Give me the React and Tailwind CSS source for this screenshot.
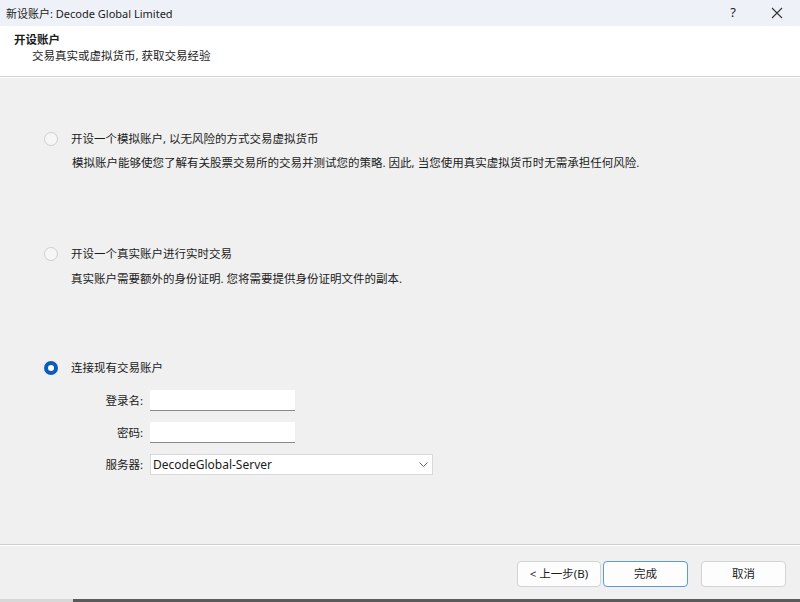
import React from "react";

const F = { fontFamily: '"Noto Sans", "Noto Sans CJK SC", sans-serif' };

function Radio({ checked }) {
  if (checked) {
    return (
      <div className="w-[14px] h-[14px] rounded-full bg-[#0b5cc1] flex items-center justify-center">
        <div className="w-[6px] h-[6px] rounded-full bg-white" />
      </div>
    );
  }
  return <div className="w-[14px] h-[14px] rounded-full border border-[#cfcfcf] bg-[#f6f6f6]" />;
}

export default function App() {
  return (
    <div className="w-[800px] h-[602px] flex flex-col bg-[#f0f0f0] text-[11.5px] text-[#1b1b1b] overflow-hidden" style={F}>
      {/* title bar */}
      <div className="h-[26px] bg-[#eef2f8] flex items-center pl-[6px] shrink-0">
        <span className="leading-none text-[11px]">新设账户: Decode Global Limited</span>
        <div className="ml-auto flex items-center">
          <span className="w-[44px] text-center text-[13px]">?</span>
          <span className="w-[44px] flex justify-center mr-[1px]">
            <svg width="12" height="12" viewBox="0 0 12 12" stroke="#333" strokeWidth="1.1" fill="none">
              <path d="M1 1L11 11M11 1L1 11" />
            </svg>
          </span>
        </div>
      </div>
      {/* header */}
      <div className="h-[50px] bg-white pl-[14px] pt-[6px] shrink-0 flex flex-col">
        <span className="font-bold leading-[16px]">开设账户</span>
        <span className="pl-[18px] leading-[16px]">交易真实或虚拟货币, 获取交易经验</span>
      </div>
      <div className="h-[1px] bg-[#d4d4d4] shrink-0" />
      <div className="h-[1px] bg-white shrink-0" />
      {/* body */}
      <div className="flex-1 flex flex-col pl-[44px]">
        <div className="mt-[53px] flex items-center h-[16px]">
          <Radio />
          <span className="ml-[13px]">开设一个模拟账户, 以无风险的方式交易虚拟货币</span>
        </div>
        <div className="mt-[8px] pl-[28px] leading-[16px]">模拟账户能够使您了解有关股票交易所的交易并测试您的策略. 因此, 当您使用真实虚拟货币时无需承担任何风险.</div>

        <div className="mt-[75px] flex items-center h-[16px]">
          <Radio />
          <span className="ml-[13px]">开设一个真实账户进行实时交易</span>
        </div>
        <div className="mt-[9px] pl-[27px] leading-[16px]">真实账户需要额外的身份证明. 您将需要提供身份证明文件的副本.</div>

        <div className="mt-[73px] flex items-center h-[16px]">
          <Radio checked />
          <span className="ml-[13px]">连接现有交易账户</span>
        </div>
        <div className="mt-[14px] grid grid-cols-[99px_auto] gap-x-[7px] gap-y-[11px] items-center w-fit">
          <span className="text-right">登录名:</span>
          <div className="w-[145px] h-[21px] bg-white border-b border-[#8a8a8a]" />
          <span className="text-right">密码:</span>
          <div className="w-[145px] h-[21px] bg-white border-b border-[#8a8a8a]" />
          <span className="text-right">服务器:</span>
          <div className="w-[283px] h-[21px] bg-white border border-[#d9d9d9] flex items-center pl-[2px] pr-[4px]">
            <span className="text-[12px] leading-none">DecodeGlobal-Server</span>
            <svg className="ml-auto" width="9" height="6" viewBox="0 0 9 6" fill="none" stroke="#666" strokeWidth="1">
              <path d="M0.5 0.5L4.5 4.5L8.5 0.5" />
            </svg>
          </div>
        </div>
      </div>
      <div className="h-[1px] bg-[#cdcdcd] shrink-0" />
      <div className="h-[1px] bg-white shrink-0" />
      {/* footer */}
      <div className="h-[53px] shrink-0 flex items-start pt-[15px] pr-[14px]">
        <div className="ml-auto flex">
          <button className="w-[84px] h-[26px] bg-[#fdfdfd] border border-[#d3d3d3] rounded-[4px] text-[11.5px]">&lt; 上一步(B)</button>
          <button className="ml-[2px] w-[85px] h-[26px] bg-[#fdfdfd] border border-[#5c9ad8] rounded-[4px] text-[11.5px]">完成</button>
          <button className="ml-[13px] w-[85px] h-[26px] bg-[#fdfdfd] border border-[#d3d3d3] rounded-[4px] text-[11.5px]">取消</button>
        </div>
      </div>
      <div className="h-[3px] shrink-0 flex">
        <div className="w-[73px] bg-[#d8d8d8]" />
        <div className="flex-1 bg-[#5a5a5a]" />
      </div>
    </div>
  );
}
